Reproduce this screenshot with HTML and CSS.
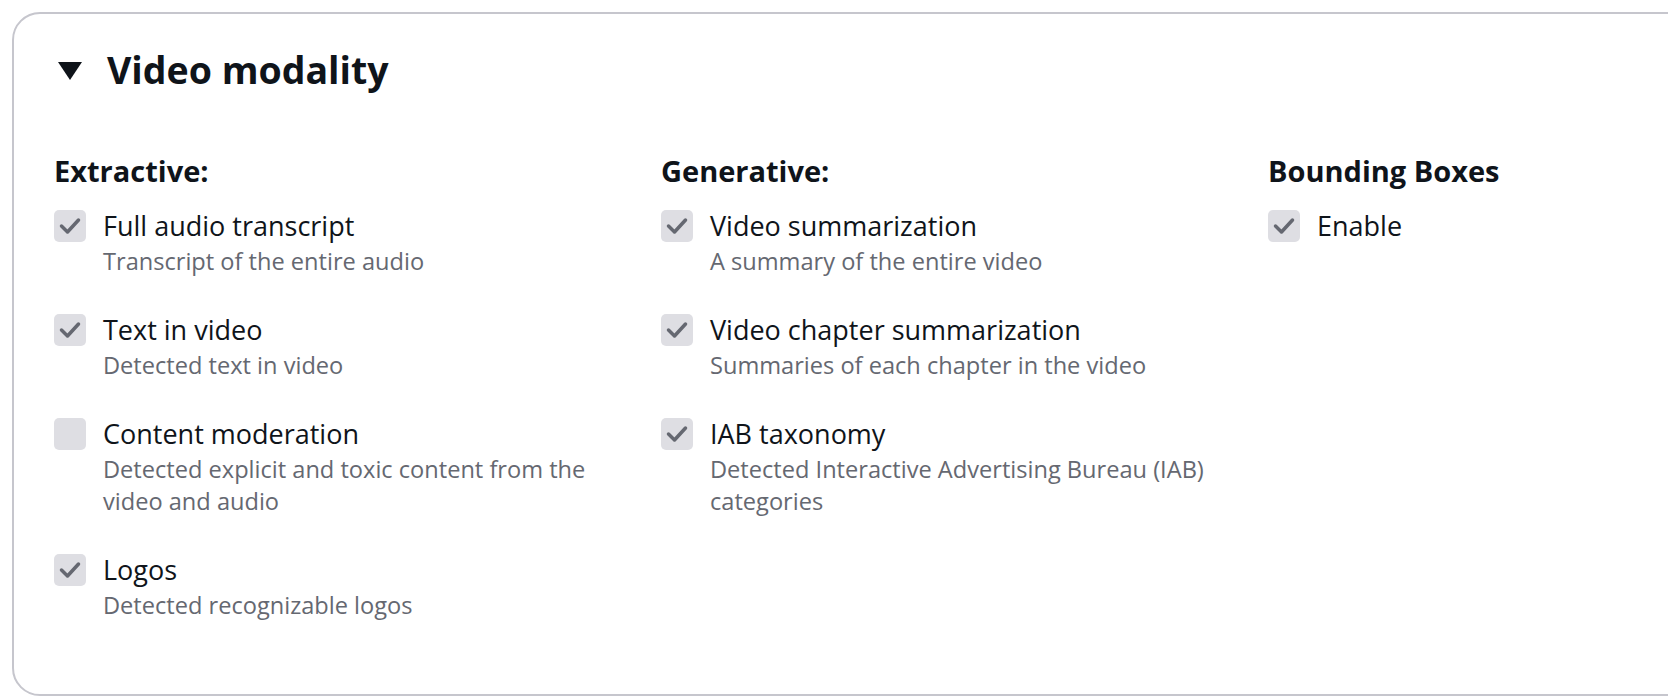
FILE: index.html
```html
<!DOCTYPE html>
<html lang="en">
<head>
<meta charset="utf-8">
<title>Video modality</title>
<link rel="stylesheet" href="styles.css">
</head>
<body>
<section class="card">
  <header class="card-header">
    <svg class="caret" width="24" height="18" viewBox="0 0 24 18" aria-hidden="true"><polygon points="0,0 24,0 12,18" fill="#0f141a"/></svg>
    <h2 class="title">Video modality</h2>
  </header>
  <div class="columns">
    <div class="column">
      <h3 class="group-title">Extractive:</h3>
      <ul class="options">
        <li class="option">
          <span class="box checked"><svg viewBox="0 0 32 32" aria-hidden="true"><polyline points="7.5,16 13.5,22 24.5,10" /></svg></span>
          <div class="text"><div class="label">Full audio transcript</div><div class="desc">Transcript of the entire audio</div></div>
        </li>
        <li class="option">
          <span class="box checked"><svg viewBox="0 0 32 32" aria-hidden="true"><polyline points="7.5,16 13.5,22 24.5,10" /></svg></span>
          <div class="text"><div class="label">Text in video</div><div class="desc">Detected text in video</div></div>
        </li>
        <li class="option">
          <span class="box"></span>
          <div class="text"><div class="label">Content moderation</div><div class="desc">Detected explicit and toxic content from the video and audio</div></div>
        </li>
        <li class="option">
          <span class="box checked"><svg viewBox="0 0 32 32" aria-hidden="true"><polyline points="7.5,16 13.5,22 24.5,10" /></svg></span>
          <div class="text"><div class="label">Logos</div><div class="desc">Detected recognizable logos</div></div>
        </li>
      </ul>
    </div>
    <div class="column">
      <h3 class="group-title">Generative:</h3>
      <ul class="options">
        <li class="option">
          <span class="box checked"><svg viewBox="0 0 32 32" aria-hidden="true"><polyline points="7.5,16 13.5,22 24.5,10" /></svg></span>
          <div class="text"><div class="label">Video summarization</div><div class="desc">A summary of the entire video</div></div>
        </li>
        <li class="option">
          <span class="box checked"><svg viewBox="0 0 32 32" aria-hidden="true"><polyline points="7.5,16 13.5,22 24.5,10" /></svg></span>
          <div class="text"><div class="label">Video chapter summarization</div><div class="desc">Summaries of each chapter in the video</div></div>
        </li>
        <li class="option">
          <span class="box checked"><svg viewBox="0 0 32 32" aria-hidden="true"><polyline points="7.5,16 13.5,22 24.5,10" /></svg></span>
          <div class="text"><div class="label">IAB taxonomy</div><div class="desc">Detected Interactive Advertising Bureau (IAB) categories</div></div>
        </li>
      </ul>
    </div>
    <div class="column">
      <h3 class="group-title">Bounding Boxes</h3>
      <ul class="options">
        <li class="option">
          <span class="box checked"><svg viewBox="0 0 32 32" aria-hidden="true"><polyline points="7.5,16 13.5,22 24.5,10" /></svg></span>
          <div class="text"><div class="label">Enable</div></div>
        </li>
      </ul>
    </div>
  </div>
</section>
</body>
</html>
```
FILE: styles.css
```css
html, body {
  margin: 0;
  padding: 0;
  overflow: hidden;
  background: #ffffff;
}
body {
  font-family: "Open Sans", "Noto Sans", Arial, sans-serif;
  color: #0f141a;
}
.card {
  margin: 12px 0 0 12px;
  width: max-content;
  border: 2px solid #c6c6cd;
  border-radius: 28px;
  padding: 34px 40px 73px 40px;
  background: #ffffff;
}
.card-header {
  display: flex;
  align-items: flex-start;
  gap: 25px;
  height: 44px;
  padding-left: 4px;
}
.caret {
  display: block;
  flex: none;
  margin-top: 14px;
}
.title {
  margin: 0;
  font-size: 37.5px;
  line-height: 44px;
  font-weight: 700;
}
.columns {
  margin-top: 61px;
  display: grid;
  grid-template-columns: repeat(3, 579px);
  column-gap: 28px;
}
.group-title {
  margin: 0 0 18px 0;
  font-size: 29px;
  line-height: 36px;
  font-weight: 700;
}
.options {
  list-style: none;
  margin: 0;
  padding: 0;
  display: flex;
  flex-direction: column;
  gap: 34px;
}
.option {
  display: flex;
  align-items: flex-start;
  gap: 17px;
}
.box {
  flex: none;
  width: 32px;
  height: 32px;
  margin-top: 3px;
  border-radius: 5px;
  background: #dedee3;
}
.box svg {
  display: block;
  width: 32px;
  height: 32px;
  fill: none;
  stroke: #656871;
  stroke-width: 3.5;
  stroke-linecap: round;
  stroke-linejoin: round;
}
.label {
  font-size: 27px;
  line-height: 38px;
}
.desc {
  font-size: 23.6px;
  line-height: 32px;
  color: #656871;
}
```
